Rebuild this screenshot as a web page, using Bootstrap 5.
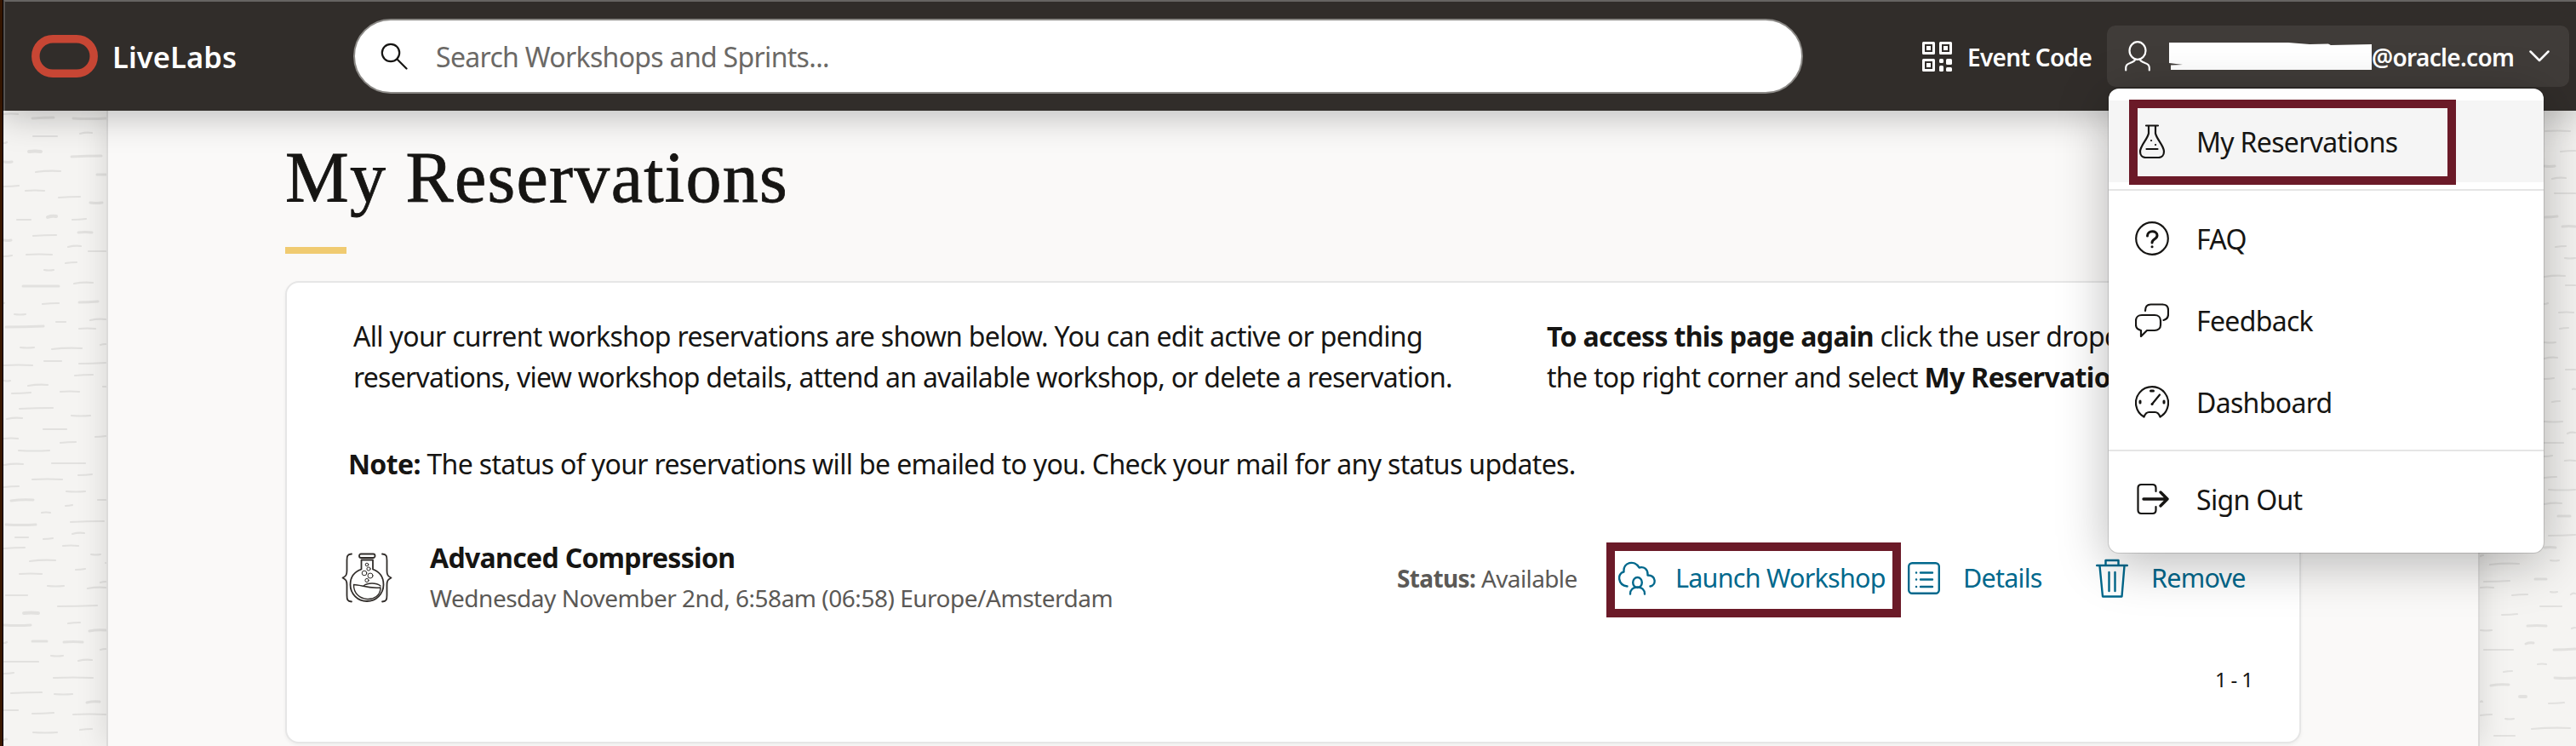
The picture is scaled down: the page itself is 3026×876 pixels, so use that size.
<!DOCTYPE html>
<html lang="en">
<head>
<meta charset="utf-8">
<title>LiveLabs - My Reservations</title>
<link href="https://cdn.jsdelivr.net/npm/bootstrap@5.3.0/dist/css/bootstrap.min.css" rel="stylesheet">
<style>
body{font-family:"Noto Sans",sans-serif;color:#161513;font-size:32px;line-height:48px;letter-spacing:-.68px;background:#f5f4f2;width:3026px;height:876px;overflow:hidden}
svg{display:block;flex:none;fill:none;stroke:currentColor;stroke-linecap:round;stroke-linejoin:round}
.solid{fill:currentColor;stroke:none}
.desk-edge{width:4px;background:#3a1800;border-right:1px solid #000}
.topbar{height:130px;background:#312d2a;border-top:2px solid #666462;border-left:2px solid #55514e;box-shadow:0 4px 44px rgba(0,0,0,.28);z-index:5;padding:0 8px 0 31px}
.brand-mark{color:#c74634}
.brand-name{font-size:34.500px;font-weight:600;letter-spacing:.1px;margin-left:17px;width:283px;padding-top:1px}
.search-field{width:1703px;height:88px;border:2px solid #8b8986;border-radius:44px;padding-left:30px;color:#161513}
.search-field span{color:#6b6966;margin-left:33px;padding-top:2px}
.event{margin-left:140px;width:217px;font-size:28px;font-weight:600}
.event span{margin-left:18px;padding-top:1px}
.user-btn{width:543px;height:72px;border-radius:10px;background:#403c39;font-size:28px;font-weight:600;padding-left:21px}
.user-btn span{padding-top:1px}
.redacted{margin-left:22px}
.caret-down{margin-left:18px}
.side{width:121px;overflow:hidden;color:#e2e1df}
.side-r{width:113px}
.panel-main{width:2788px;background:#faf9f8;border:solid #dcdbda;border-width:0 2px;padding:29px 208px 0;box-shadow:0 0 34px rgba(0,0,0,.13)}
h1{font-family:"Liberation Serif",serif;font-size:84px;line-height:100px;letter-spacing:1.3px;margin:0;-webkit-text-stroke:.8px #161513}
.accent{width:72px;height:8px;background:#f0cb71;margin:31px 0 32px}
.panel-card{width:2368px;height:543px;background:#fff;border:2px solid #e6e6e6;border-radius:16px;padding:39px 0 0 78px;box-shadow:0 2px 4px rgba(0,0,0,.05)}
.intro{width:1402px}
.tight{letter-spacing:-.75px}
.note{margin:54px 0 62px -6px;letter-spacing:-.65px}
.res-text{width:1136px;margin-left:43px}
.res-row{margin-left:-13px;height:95px}
.flask{color:#312d2a;margin-left:-1px;margin-right:1px}
.sub{font-size:28px;line-height:47px;color:#5b5956;letter-spacing:-.48px}
.status{width:246px;font-size:28px;color:#5b5956;letter-spacing:-.62px}
.act{color:#00688c;font-size:30.500px;letter-spacing:-.75px;white-space:nowrap}
.act span{margin-left:27px;padding-bottom:1px}
.launch span{margin-left:23px}
.details{width:156px}
.boxed{border:10px solid #6b1a28}
.launch{width:346px;height:88px;padding:0 0 5px 4px;margin-top:5px}
.pager{font-size:24px;margin:48px 0 0 2187px}
.user-menu{position:absolute;left:2477px;top:104px;width:511px;height:545px;background:#fff;border-radius:12px;padding:14px 0;z-index:10;box-shadow:0 0 0 1px rgba(0,0,0,.14),0 12px 60px rgba(0,0,0,.28)}
.user-menu a{height:96px;padding-left:31px;color:#161513}
.user-menu a.current{background:#f5f5f5}
.user-menu a span{margin-left:32px;padding-top:2px}
.user-menu hr{margin:8px 0;border:0;height:2px;background:#e5e5e5;opacity:1}
.marker{position:absolute;left:24px;top:13px;width:384px;height:100px}
</style>
</head>
<body class="d-flex position-relative">
<div class="desk-edge flex-shrink-0"></div>
<div class="d-flex flex-column flex-grow-1">
<header class="topbar d-flex align-items-center text-white position-relative flex-shrink-0">
  <svg class="brand-mark" width="78" height="50" viewBox="0 0 78 50" stroke-width="9.500"><rect x="4.800" y="4.800" width="68.400" height="40.400" rx="20.200"/></svg>
  <div class="brand-name">LiveLabs</div>
  <div class="search-field bg-white d-flex align-items-center">
    <svg width="32" height="32" viewBox="0 0 32 32" stroke-width="2.200"><circle cx="12" cy="12" r="10.200"/><path d="M19.500 19.500 30.500 30.500"/></svg>
    <span>Search Workshops and Sprints...</span>
  </div>
  <div class="event d-flex align-items-center">
    <svg width="35" height="35" viewBox="0 0 35 35" stroke-width="3"><path d="M1.500 1.500h12v12h-12zM21.500 1.500h12v12h-12zM1.500 21.500h12v12h-12z"/><g class="solid"><path d="M5 5h5v5H5zM25 5h5v5h-5zM5 25h5v5H5z"/><rect x="20" y="20" width="5" height="5" rx="1.500"/><rect x="28" y="20" width="7" height="7" rx="1.500"/><rect x="20" y="28" width="5" height="7" rx="1.500"/><rect x="28" y="30" width="7" height="5" rx="1.500"/></g></svg>
    <span>Event Code</span>
  </div>
  <div class="user-btn d-flex align-items-center">
    <svg width="30" height="36" viewBox="0 0 30 36" stroke-width="2.200"><ellipse cx="15" cy="11.500" rx="9.500" ry="10.300"/><path d="M1.200 34.500v-3c0-3 2-4.500 5-5.500 4-1.500 6-2.500 6-4.500M28.800 34.500v-3c0-3-2-4.500-5-5.500-4-1.500-6-2.500-6-4.500"/></svg>
    <svg class="redacted solid" width="238" height="32" viewBox="0 0 238 32"><path d="M0 0H140L165 2 187 1.500 190 3 238 2V32H2V26.500L16 26 0 24Z"/></svg>
    <span>@oracle.com</span>
    <svg class="caret-down" width="24" height="14" viewBox="0 0 24 14" stroke-width="2.500"><path d="M1.500 1.500 12 12 22.500 1.500"/></svg>
  </div>
</header>
<main class="d-flex flex-grow-1">
  <div class="side"><svg id="bark-left" width="121" height="746" viewBox="4 130 121 746"></svg></div>
  <section class="panel-main position-relative">
    <h1>My Reservations</h1>
    <div class="accent"></div>
    <div class="panel-card">
      <div class="d-flex">
        <div class="intro">All your current workshop reservations are shown below. You can edit active or pending<br><span class="tight">reservations, view workshop details, attend an available workshop, or delete a reservation.</span></div>
        <div class="text-nowrap"><b>To access this page again</b> click the user dropdown in<br>the top right corner and select <b>My Reservations</b></div>
      </div>
      <div class="note"><b>Note:</b> The status of your reservations will be emailed to you. Check your mail for any status updates.</div>
      <div class="res-row d-flex align-items-center">
        <svg class="flask" width="60" height="60" viewBox="0 0 60 60" stroke-width="1.800"><path d="M12 1.500C7 2 6.500 4 6.500 9v12c0 5-1 6.500-5 8.500 4 2 5 3.500 5 8.500v12c0 5 .5 7 5.500 7.500M48 1.500c5 .5 5.500 2.500 5.500 7.500v12c0 5 1 6.500 5 8.500-4 2-5 3.500-5 8.500v12c0 5-.5 7-5.500 7.500"/><rect x="21" y="1.500" width="18.500" height="4.500" rx="2"/><path d="M23.500 8.500h13.500v11c8 3 12.500 9.500 12.500 18a19.500 19.500 0 0 1-39 0c0-8.500 4.500-15 13-18z"/><path stroke-width="1.400" d="M14.500 37.500c8 0 17 5 31.500 3.500 0 19-32 18-31.500-3.500ZM26 39c5-4 15-4 20 0"/><g stroke-width="1"><circle cx="30" cy="14" r="1.800"/><circle cx="32" cy="19" r="2.100"/><circle cx="27" cy="24" r="2.800"/><circle cx="34" cy="27" r="3"/><circle cx="30" cy="32.500" r="2.100"/></g></svg>
        <div class="res-text flex-shrink-0"><b>Advanced Compression</b><div class="sub">Wednesday November 2nd, 6:58am (06:58) Europe/Amsterdam</div></div>
        <div class="status"><b>Status:</b> Available</div>
        <div class="act launch boxed d-flex align-items-center">
          <svg width="44" height="40" viewBox="0 0 44 40" stroke-width="2.400"><path d="M10.500 29.500C-1 28-1.500 14 6.500 12.500 5.500 1 19-2 24.500 7.500 30 6 35 9 34.500 16.500c10 0 10.500 11.500 3 13M14 38.500c0-5 3.500-8 8.500-8s8.500 3 8.500 8"/><ellipse cx="22.500" cy="25" rx="5.300" ry="6"/></svg>
          <span>Launch Workshop</span>
        </div>
        <div class="act d-flex align-items-center ms-2">
          <svg width="38" height="38" viewBox="0 0 38 38" stroke-width="2.400"><rect x="1.200" y="1.200" width="35.600" height="35.600" rx="4"/><path d="M15 12.500h14M15 20.500h14M15 29h14M10 12.500h.1M10 20.500h.1M10 29h.1"/></svg>
          <span class="details">Details</span>
          <svg width="38" height="46" viewBox="0 0 38 46" stroke-width="2.400"><path d="M1.200 8h35.600M11.500 7.500V2h15v5.500M4.500 8.500 8 44.500h22.500l3-36M15.500 16v22M22.500 16v22"/></svg>
          <span>Remove</span>
        </div>
      </div>
      <div class="pager">1 - 1</div>
    </div>
  </section>
  <div class="side side-r"><svg id="bark-right" width="113" height="746" viewBox="2913 130 113 746"></svg></div>
</main>
</div>
<nav class="user-menu d-flex flex-column">
  <a class="current d-flex align-items-center text-decoration-none"><svg width="40" height="40" viewBox="0 0 40 40" stroke-width="2.200"><path d="M13 1.500h14M16 1.500v9C15 17 6 25 6 32c0 4 2.500 7 6.500 7h15c4 0 6.500-3 6.500-7 0-7-9-15-10-21.500v-9M13.500 29h13M19 19h.1M24 24h.1"/></svg><span>My Reservations</span></a>
  <hr>
  <a class="d-flex align-items-center text-decoration-none"><svg width="40" height="40" viewBox="0 0 40 40" stroke-width="2.200"><circle cx="20" cy="20" r="18.800"/><path stroke-width="3" d="M14.500 17c0-7 11.500-7 11.500-.5 0 4.500-6 4-6 8.500M20 29.800h.1"/></svg><span>FAQ</span></a>
  <a class="d-flex align-items-center text-decoration-none"><svg width="40" height="40" viewBox="0 0 40 40" stroke-width="2.200"><path d="M8 14h15c4 0 7 2.500 7 6.500v5c0 4-3 6.500-7 6.500h-9l-7 7v-7c-4-1-6-3-6-6.500v-5C1 16.500 4 14 8 14ZM12 9c0-5 2-7.500 6.500-7.500H32c4.500 0 7 2.500 7 6.500v5c0 4-2 6-5.500 7"/></svg><span>Feedback</span></a>
  <a class="d-flex align-items-center text-decoration-none"><svg width="40" height="40" viewBox="0 0 40 40" stroke-width="2.200"><path d="M10.500 37.500a19 19 0 1 1 19 0c-1.500-4-3-5.500-6-5.500h-7c-3 0-4.500 1.500-6 5.500ZM20 22.500 29 11.500"/><path stroke-width="3" d="M18.500 7h3M6 19v2M34 19v2M20 22.500h.1"/></svg><span>Dashboard</span></a>
  <hr>
  <a class="d-flex align-items-center text-decoration-none"><svg width="40" height="40" viewBox="0 0 40 40" stroke-width="2.200"><path d="M24.500 11V7c0-2.500-1.500-4-4-4h-13C5 3 3.500 4.500 3.500 7v26c0 2.500 1.500 4 4 4h13c2.500 0 4-1.500 4-4v-4"/><path stroke-width="3.400" d="M10 20h28M30 12l8 8-8 8"/></svg><span>Sign Out</span></a>
  <div class="marker boxed"></div>
</nav>
<script>
// Bark texture: short strokes as [x start, x end, y, weight], on the page's own grid
const left = [[4,22,134],[37,64,138,3],[85,125,139,3],[93,109,156],[38,68,160],[4,9,167],[33,49,178,4],[83,120,183,3],[4,15,190,3],[41,72,201],[113,125,205,3],[4,23,218],[29,53,224],[68,95,231],[105,121,238,3],[55,67,254,4],[19,37,258],[84,102,257],[91,109,273,3],[38,67,276],[4,14,282,3],[79,96,289],[103,125,295],[4,15,300],[30,62,299],[76,91,308],[51,64,317],[86,110,332],[26,70,336,3],[92,116,354,3],[4,6,356],[49,70,356],[16,31,369],[105,125,375],[65,78,378],[6,52,383,3],[92,113,386],[117,125,404],[23,41,408],[60,97,409],[51,73,424],[92,125,426],[4,39,429],[87,110,440],[4,13,447],[32,57,452],[120,125,454],[13,37,461],[70,94,460],[22,63,479],[83,107,488],[7,27,491],[50,79,504],[111,125,512],[4,22,515],[70,90,519],[21,59,529],[4,28,545],[60,101,544],[91,109,557],[37,74,563],[4,23,571],[77,101,577],[12,40,587,3],[114,125,587],[76,86,593],[48,60,602],[82,123,612],[6,43,616,3],[84,100,626],[17,34,631],[50,63,632],[73,93,641],[4,30,643],[106,119,651],[34,66,658],[123,125,661],[88,101,668],[22,50,674],[117,125,683],[55,76,688],[102,125,690],[6,33,699],[67,115,711],[27,46,720,4],[79,95,731],[4,37,734,3],[104,125,740,3],[37,56,753,3],[4,9,754],[74,98,754,3],[117,125,762],[59,75,770],[91,109,775],[4,46,777],[4,17,790],[62,110,796],[12,50,813],[63,86,815],[101,118,824,3],[4,22,834],[37,64,837],[85,125,839],[93,109,856],[38,68,860],[4,9,868]];
const right = [[2989,3020,154],[3007,3026,177],[2988,3002,195,3],[2997,3015,209],[3000,3026,227],[2989,3005,254,3],[3009,3026,266,3],[3001,3015,289],[3012,3026,303],[2988,3014,324],[3013,3026,335],[2988,2994,356],[3005,3024,367],[3006,3018,385],[2988,3003,402],[2988,3005,420],[3013,3026,434],[2988,3001,444],[3021,3026,457],[2997,3008,471],[2988,3011,495],[3015,3026,508],[2988,3012,520],[2988,2999,535],[3012,3026,541],[2988,3004,560],[2993,3026,575],[2988,3010,591],[3004,3020,606,3],[2993,3026,628],[2988,3003,643,3],[2913,2918,652],[2995,3007,658],[2924,2960,662],[2977,2992,680,3],[2917,2949,682],[2913,2930,690],[2950,2970,698],[2995,3005,695],[3019,3026,697],[2983,3010,712],[2938,2958,721],[2968,2992,735,3],[3020,3026,737],[2913,2928,740],[2966,2977,755,3],[2917,2953,763],[2999,3026,762,3],[2980,2992,780],[2940,2952,788],[3000,3026,796,3],[2925,2948,804,3],[2959,2968,818,4],[2993,3013,825],[2913,2917,824],[2913,2928,839],[2942,2954,844],[2973,3020,855],[2929,2955,864]];
const draw = (id, strokes) => {
  document.getElementById(id).innerHTML = strokes.map(([a, b, y, w = 2.2], i) =>
    `<path stroke-width="${w}" d="M${a + 1} ${y + (i % 2)}Q${(a + b) / 2} ${y - 1 + (i % 3)} ${b - 1} ${y}"/>`).join('');
};
draw('bark-left', left);
draw('bark-right', right);
</script>
<script src="https://cdn.jsdelivr.net/npm/bootstrap@5.3.0/dist/js/bootstrap.bundle.min.js"></script>
</body>
</html>
